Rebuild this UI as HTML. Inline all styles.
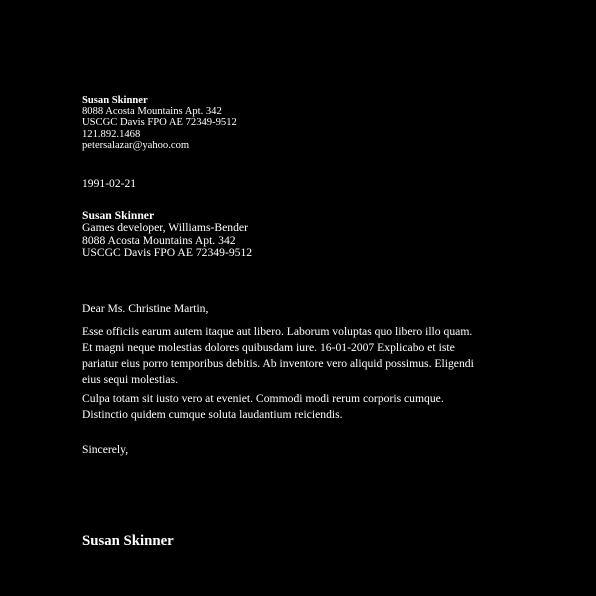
<!DOCTYPE html>
<html><head><meta charset="utf-8"><style>
html,body{margin:0;padding:0;background:#000;width:596px;height:596px;overflow:hidden}
body{color:#fff;font-family:"Liberation Serif",serif;position:relative}
.b{position:absolute;left:82px;white-space:nowrap}
</style></head><body>
<div class="b" style="top:95px;font-size:10.6px;line-height:11.2px">
<b>Susan Skinner</b><br>8088 Acosta Mountains Apt. 342<br>USCGC Davis FPO AE 72349-9512<br>121.892.1468<br>petersalazar@yahoo.com
</div>
<div class="b" style="top:177px;font-size:11.6px;line-height:14px">1991-02-21</div>
<div class="b" style="top:210px;font-size:11.65px;line-height:12.4px">
<b>Susan Skinner</b><br>Games developer, Williams-Bender<br>8088 Acosta Mountains Apt. 342<br>USCGC Davis FPO AE 72349-9512
</div>
<div class="b" style="top:301px;font-size:11.65px;line-height:16px">Dear Ms. Christine Martin,</div>
<div class="b" style="top:324px;font-size:11.65px;line-height:16px">
Esse officiis earum autem itaque aut libero. Laborum voluptas quo libero illo quam.<br>Et magni neque molestias dolores quibusdam iure. 16-01-2007 Explicabo et iste<br>pariatur eius porro temporibus debitis. Ab inventore vero aliquid possimus. Eligendi<br>eius sequi molestias.
</div>
<div class="b" style="top:391px;font-size:11.65px;line-height:15.5px">
Culpa totam sit iusto vero at eveniet. Commodi modi rerum corporis cumque.<br>Distinctio quidem cumque soluta laudantium reiciendis.
</div>
<div class="b" style="top:442px;font-size:11.65px;line-height:16px">Sincerely,</div>
<div class="b" style="top:532px;font-size:14.8px;line-height:18px;font-weight:bold">Susan Skinner</div>
</body></html>
